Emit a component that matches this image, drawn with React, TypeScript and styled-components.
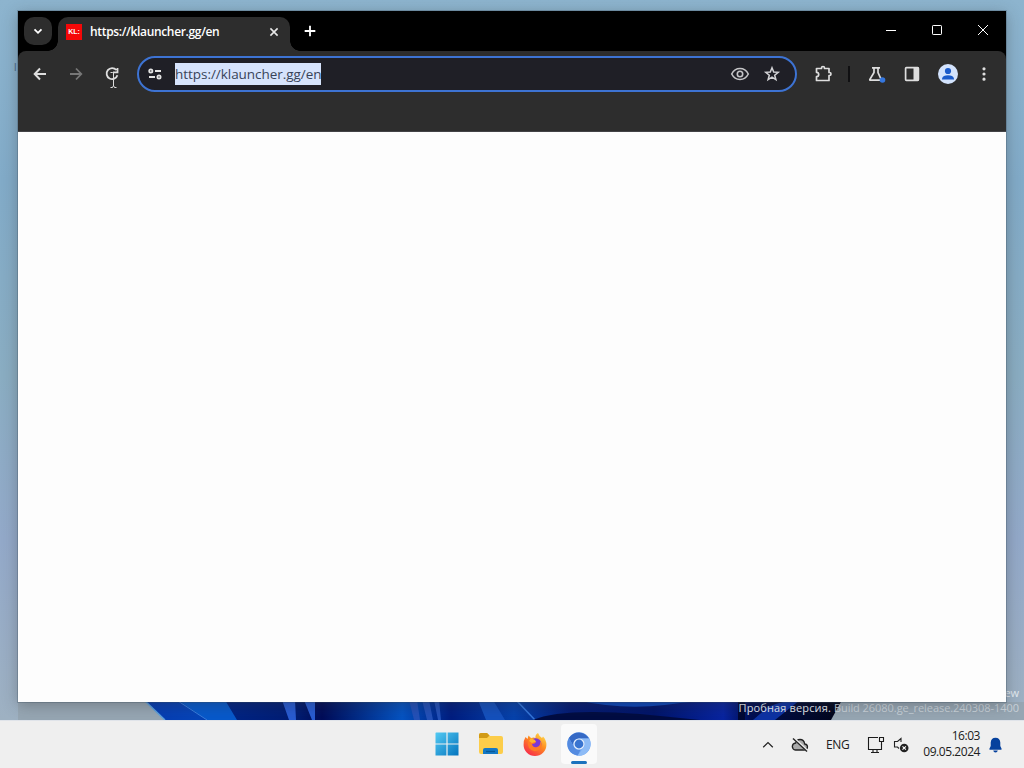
import React from 'react';
import styled, { createGlobalStyle } from 'styled-components';

const GlobalStyle = createGlobalStyle`
    * { box-sizing: border-box; }
    body { margin: 0; overflow: hidden; font-family: 'Open Sans', 'Noto Sans', sans-serif; }
    svg { display: block; flex: none; }
`;

const Screen = styled.div`
    width: 1024px;
    height: 768px;
    display: flex;
    flex-direction: column;
    overflow: hidden;
`;

const Desktop = styled.div`
    position: relative;
    height: 720px;
    padding: 11px 18px 18px;
    overflow: hidden;
    background: linear-gradient(180deg, #8db4ce 0%, #82abc8 25%, #8aadc2 52%, #93a9c9 75%, #9eb1c2 100%);
`;

const Wallpaper = styled.svg`
    position: absolute;
    left: 0;
    top: 700px;
`;

const ShortcutLabel = styled.span`
    position: absolute;
    left: 14px;
    top: 61px;
    color: #44637c;
    font-size: 10px;
    line-height: 12px;
`;

const Watermark = styled.div`
    position: absolute;
    right: 5px;
    bottom: 5px;
    color: #e4ebf2;
    font-size: 11px;
    line-height: 15px;
    text-align: right;
    white-space: nowrap;
`;

const WatermarkLine = styled.div<{ $spacing: number }>`
    letter-spacing: ${p => p.$spacing}px;
`;

const Faded = styled.span`
    color: #c9d2da;
    letter-spacing: -0.05px;
`;

const BrowserWindow = styled.div`
    position: relative;
    height: 691px;
    display: flex;
    flex-direction: column;
    background: #000;
    box-shadow: 0 0 0 1px rgba(60, 80, 95, 0.3), 0 3px 14px rgba(50, 50, 50, 0.35);
`;

const TitleBar = styled.div`
    height: 40px;
    display: flex;
    align-items: flex-start;
    padding-left: 6px;
`;

const TabSearch = styled.div`
    width: 28px;
    height: 28px;
    margin-top: 6px;
    border-radius: 10px;
    background: #2d2d2d;
`;

const Tab = styled.div`
    position: relative;
    width: 232px;
    height: 34px;
    margin: 6px 0 0 6px;
    padding: 0 8px 4px 8px;
    display: flex;
    align-items: center;
    border-radius: 10px 10px 0 0;
    background: #2d2d2d;

    &::before,
    &::after {
        content: '';
        position: absolute;
        bottom: 0;
        width: 10px;
        height: 10px;
    }
    &::before {
        left: -10px;
        background: radial-gradient(circle at 0 0, transparent 9.5px, #2d2d2d 10px);
    }
    &::after {
        right: -10px;
        background: radial-gradient(circle at 100% 0, transparent 9.5px, #2d2d2d 10px);
    }
`;

const Favicon = styled.div`
    width: 16px;
    height: 16px;
    background: #f50808;
    color: #fff;
    font: bold 7px/16px 'Liberation Sans', sans-serif;
    text-align: center;
`;

const TabTitle = styled.div`
    flex: 1;
    margin-left: 8px;
    color: #fff;
    font-size: 12px;
    font-weight: 600;
    letter-spacing: -0.33px;
    line-height: 18px;
    white-space: nowrap;
`;

const NewTab = styled.div`
    margin: 6px 0 0 6px;
`;

const CaptionButtons = styled.div`
    display: flex;
    margin-left: auto;
`;

const Caption = styled.div`
    width: 46px;
    height: 38px;
    display: flex;
    align-items: center;
    justify-content: center;
`;

const Toolbar = styled.div`
    height: 81px;
    display: flex;
    align-items: flex-start;
    padding: 5px 4px 0;
    background: #2d2d2d;
    border-radius: 8px 8px 0 0;
    border-bottom: 1px solid #434346;
`;

const Tool = styled.div<{ $width?: number }>`
    flex: none;
    width: ${p => p.$width || 36}px;
    height: 36px;
    display: flex;
    align-items: center;
    justify-content: center;
`;

const Omnibox = styled.div`
    flex: none;
    width: 660px;
    height: 36px;
    margin-left: 7px;
    padding: 0 13px 0 6px;
    display: flex;
    align-items: center;
    gap: 12px;
    border: 2px solid #3d73d3;
    border-radius: 18px;
    background: #1f1f26;
`;

const SiteInfo = styled.div`
    width: 20px;
    height: 20px;
`;

const Url = styled.span`
    width: 146px;
    height: 22px;
    margin-left: -2px;
    margin-right: auto;
    background: #d6e3fc;
    color: #384358;
    font-size: 13.5px;
    line-height: 22px;
    letter-spacing: -0.04px;
    white-space: nowrap;
`;

const Divider = styled.div`
    flex: none;
    width: 2px;
    height: 16px;
    margin: 10px 8px 0 0;
    background: #101012;
`;

const Page = styled.div`
    flex: 1;
    background: #fdfdfd;
`;

const Cursor = styled.svg`
    position: absolute;
    left: 92px;
    top: 60px;
`;

const Taskbar = styled.div`
    height: 48px;
    display: grid;
    grid-template-columns: 1fr 174px 1fr;
    background: #efefef;
    border-top: 1px solid #e0e4ea;
`;

const Apps = styled.div`
    grid-column: 2;
    display: flex;
`;

const AppButton = styled.div<{ $active?: boolean }>`
    position: relative;
    flex: none;
    width: 36px;
    height: 40px;
    margin: 3px 4px;
    display: flex;
    align-items: center;
    justify-content: center;
    border-radius: 4px;
    background: ${p => (p.$active ? '#fafafa' : 'transparent')};

    &::after {
        content: '';
        display: ${p => (p.$active ? 'block' : 'none')};
        position: absolute;
        left: 10px;
        bottom: 0;
        width: 16px;
        height: 3px;
        border-radius: 2px;
        background: #1a72bd;
    }
`;

const Tray = styled.div`
    display: flex;
    align-items: center;
    justify-content: flex-end;
    padding-right: 21px;
    color: #202020;
`;

const Language = styled.div`
    margin: 0 17px 0 17px;
    width: 24px;
    font-size: 12px;
    letter-spacing: -0.35px;
    white-space: nowrap;
`;

const Clock = styled.div`
    width: 60px;
    margin: -1px 8px 0 10px;
    font-size: 12px;
    line-height: 16px;
    letter-spacing: -0.45px;
    text-align: right;
    white-space: nowrap;
`;

interface IconProps {
    size?: number;
    color?: string;
    stroke?: number;
    children: React.ReactNode;
}

// all toolbar glyphs share a 20 unit grid
const Icon: React.FC<IconProps> = ({ size = 20, color = '#dedede', stroke = 1.7, children }) => (
    <svg width={size} height={size} viewBox="0 0 20 20" fill="none" stroke={color} strokeWidth={stroke}>
        {children}
    </svg>
);

const Bloom = () => (
    <Wallpaper width="1024" height="20" viewBox="0 0 1024 20">
        <defs>
            <linearGradient id="petals" x1="0" x2="1">
                <stop offset="0" stopColor="#063bb0" />
                <stop offset=".08" stopColor="#0644b8" />
                <stop offset=".12" stopColor="#002484" />
                <stop offset=".22" stopColor="#001c72" />
                <stop offset=".255" stopColor="#000c58" />
                <stop offset=".37" stopColor="#0553c2" />
                <stop offset=".44" stopColor="#001d80" />
                <stop offset=".53" stopColor="#0642ac" />
                <stop offset=".61" stopColor="#041b74" />
                <stop offset=".73" stopColor="#001469" />
                <stop offset=".83" stopColor="#0824a0" />
                <stop offset=".87" stopColor="#000e52" />
                <stop offset="1" stopColor="#020618" />
            </linearGradient>
        </defs>
        <rect x="18" y="2" width="1006" height="18" fill="#96a6b3" />
        <path d="M144 0L165 20H831L842 0Z" fill="url(#petals)" />
        <path d="M144 0L165 20" stroke="#5b9fdc" strokeWidth="1.5" />
        <path d="M178 0L207 20H237L225 0Z" fill="#0759cb" />
        <path d="M178 1L207 20" stroke="#387ddd" />
        <path d="M282 0L289 20H296L295 0ZM304 0L312 20H315V0Z" fill="#285bd2" />
        <path d="M409 0L414 20H420L417 0ZM422 0L427 20H433L429 0ZM434 0L438 20H441L439 0Z" fill="#2350b8" />
        <path d="M478 0L486 20H505L493 0Z" fill="#1450bd" />
        <path d="M516 0L535 20" stroke="#3476da" strokeWidth="1.5" />
        <path d="M533 20Q560 8 640 14L700 20Z" fill="#000c42" />
        <path d="M576 0Q620 10 665 5Q700 0 730 0Z" fill="#0c46ba" />
        <path d="M738 0H745V20H738Z" fill="#010834" />
        <path d="M753 20L768 7Q784 0 800 0L775 20Z" fill="#0d32a4" />
    </Wallpaper>
);

const Start = () => (
    <svg width="24" height="24" viewBox="0 0 24 24">
        <defs>
            <linearGradient id="start" gradientUnits="userSpaceOnUse" x2="24" y2="24">
                <stop stopColor="#55ccf4" />
                <stop offset="1" stopColor="#0272bd" />
            </linearGradient>
        </defs>
        <path fill="url(#start)" d="M1 .5H11.4V11.4H.5V1ZM12.6 .5H23.5V11.4H12.6ZM.5 12.6H11.4V23.5H.5ZM12.6 12.6H23.5V23.5H12.6Z" />
    </svg>
);

const Explorer = () => (
    <svg width="26" height="24" viewBox="0 0 26 24">
        <path d="M1 3Q1 1 3 1H9L12 4H23Q25 4 25 6V20Q25 22 23 22H3Q1 22 1 20Z" fill="#fccd4a" />
        <path d="M1 3Q1 1 3 1H9L11.5 3.5L9 6H1Z" fill="#d19a16" />
        <path d="M5 22V18Q5 16 7 16H18Q20 16 20 18V22Z" fill="#1478c5" />
        <path d="M8 19.5H17" stroke="#075999" strokeWidth="1.3" />
    </svg>
);

const Firefox = () => (
    <svg width="24" height="24" viewBox="0 0 24 24">
        <defs>
            <linearGradient id="fox" x1=".9" y1="0" x2=".2" y2="1">
                <stop stopColor="#ffe550" />
                <stop offset=".45" stopColor="#ff8a1f" />
                <stop offset="1" stopColor="#f6244e" />
            </linearGradient>
        </defs>
        <path fill="url(#fox)" d="M2.5 5L4.5 7L5.5 3.5L8 6Q11 5 12.5 6Q12 2.5 15 1Q16 4 19 6L20 4.5Q23.5 8 23.4 13A11.4 11 0 0 1 .6 13Q.5 8 2.5 5Z" />
        <circle cx="12.7" cy="12" r="5.7" fill="#7b38d4" />
        <path d="M5 8Q8 6 10 8L13 10Q12 12 9 12Q10 16 14 15Q18 14 17 9Q21 14 16 18Q10 21 6 16Q4 12 5 8Z" fill="#ff7b25" />
        <path d="M8 6L12 8L13 10Q11 10 9 11L6 9Z" fill="#ffb52e" />
    </svg>
);

const Chromium = () => (
    <svg width="24" height="24" viewBox="0 0 24 24">
        <circle cx="12" cy="12" r="11.7" fill="#72a9f3" />
        <path d="M1.9 6.1A11.7 11.7 0 0 1 22.1 6.5H12A5.6 5.6 0 0 0 7 14.7Z" fill="#3569c5" />
        <path d="M1.9 6.1L7 14.8A5.6 5.6 0 0 0 13.6 17.4L10.8 23.6A11.7 11.7 0 0 1 1.9 6.1Z" fill="#548be0" />
        <path d="M22.1 6.5H12L17 9.2Q18.8 13 16.8 15L10.8 23.6A11.7 11.7 0 0 0 22.1 6.5Z" fill="#8dbbf6" />
        <circle cx="12" cy="12" r="5.6" fill="#e6effc" />
        <circle cx="12" cy="12" r="4.4" fill="#3974d0" />
    </svg>
);

const TabStrip = () => (
    <TitleBar>
        <TabSearch>
            <Icon size={28} color="#fff" stroke={1.3}><path d="M7.5 8.8L10 11.3L12.5 8.8" /></Icon>
        </TabSearch>
        <Tab>
            <Favicon>KL:</Favicon>
            <TabTitle>https://klauncher.gg/en</TabTitle>
            <Icon size={16} color="#e8e8e8" stroke={2}><path d="M5.5 5.5L14.5 14.5M14.5 5.5L5.5 14.5" /></Icon>
        </Tab>
        <NewTab>
            <Icon size={28} color="#fff" stroke={1.3}><path d="M6.2 10H13.8M10 6.2V13.8" /></Icon>
        </NewTab>
        <CaptionButtons>
            <Caption><Icon color="#fff" stroke={1}><path d="M5 10.5H15" /></Icon></Caption>
            <Caption><Icon color="#fff" stroke={1}><rect x="5.5" y="5.5" width="9" height="9" rx=".7" /></Icon></Caption>
            <Caption><Icon color="#fff" stroke={1}><path d="M5 5L15 15M15 5L5 15" /></Icon></Caption>
        </CaptionButtons>
    </TitleBar>
);

const BrowserToolbar = () => (
    <Toolbar>
        <Tool><Icon stroke={2}><path d="M16 10H5M10 4.5L4.7 10L10 15.5" /></Icon></Tool>
        <Tool><Icon color="#777" stroke={1.8}><path d="M4 10H15M10 4.5L15.3 10L10 15.5" /></Icon></Tool>
        <Tool>
            <Icon stroke={1.8}>
                <path d="M14.3 6A5.5 5.5 0 1 0 15.4 11.2M15.5 4V8.3H11" />
            </Icon>
        </Tool>
        <Omnibox>
            <SiteInfo>
                <Icon size={20} color="#e3e3e3" stroke={1.8}>
                    <circle cx="5.8" cy="7" r="1.6" />
                    <path d="M10 7H16M4 13H10" />
                    <circle cx="14" cy="13" r="1.6" />
                </Icon>
            </SiteInfo>
            <Url>https://klauncher.gg/en</Url>
            <Icon color="#c4c4c7" stroke={1.6}>
                <path d="M1.7 10Q4.5 4.5 10 4.5T18.3 10Q15.5 15.5 10 15.5T1.7 10Z" />
                <circle cx="10" cy="10" r="2.7" />
            </Icon>
            <Icon color="#d2d2d5" stroke={1.5}>
                <path d="M10 3.8L11.7 8L16.2 8.3L12.7 11.2L13.9 15.7L10 13.2L6.1 15.7L7.3 11.2L3.8 8.3L8.3 8Z" />
            </Icon>
        </Omnibox>
        <Tool $width={51}>
            <Icon>
                <path d="M3.5 4.5H8.5V4A1.5 1.5 0 0 1 11.5 4V4.5H16V8.5H16.5A1.5 1.5 0 0 1 16.5 11.5H16V16.5H3.5V12.7A2.2 2.2 0 0 0 3.5 8.3Z" strokeLinejoin="round" />
            </Icon>
        </Tool>
        <Divider />
        <Tool>
            <Icon>
                <path d="M6 3.8H14M8 4V8.5L3.8 15.5Q3.7 16.2 4.5 16.2H15.5L12 8.5V4" />
                <circle cx="16.5" cy="16" r="2.8" fill="#3577df" stroke="none" />
            </Icon>
        </Tool>
        <Tool>
            <Icon>
                <rect x="3.6" y="3.7" width="12.8" height="12.6" rx=".8" />
                <path d="M11.5 3.5H17V16.5H11.5Z" fill="#dedede" stroke="none" />
            </Icon>
        </Tool>
        <Tool>
            <Icon color="none">
                <circle cx="10" cy="10" r="10" fill="#d3e3fd" />
                <circle cx="10" cy="7" r="3.1" fill="#1a5bcb" />
                <path d="M4 15.5V14.5Q5 11.3 10 11.3T16 14.5V15.5Z" fill="#1a5bcb" />
            </Icon>
        </Tool>
        <Tool>
            <Icon color="none">
                <path d="M10 3.2A1.6 1.6 0 1 1 10 6.4A1.6 1.6 0 1 1 10 3.2M10 8.4A1.6 1.6 0 1 1 10 11.6A1.6 1.6 0 1 1 10 8.4M10 13.6A1.6 1.6 0 1 1 10 16.8A1.6 1.6 0 1 1 10 13.6" fill="#dedede" />
            </Icon>
        </Tool>
    </Toolbar>
);

const SystemTray = () => (
    <Tray>
        <svg width="12" height="12" fill="none" stroke="#222" strokeWidth="1.2"><path d="M1.2 8.3L6 3.6L10.8 8.3" /></svg>
        <svg width="18" height="16" viewBox="0 0 18 16" fill="none" stroke="#222" strokeWidth="1.3" style={{ marginLeft: 17 }}>
            <path d="M4.5 13H13.5Q16.5 12.6 16.5 9.8Q16.3 7.2 13.7 7Q13 2.5 9 2.5Q5.5 2.5 4.7 6Q1.5 6.3 1.3 9.5Q1.5 12.6 4.5 13Z" fill="#aaa" />
            <path d="M3 1.5L16.5 14" stroke="#efefef" strokeWidth="2.4" />
            <path d="M2 1.5L16 14.5" strokeWidth="1.4" />
        </svg>
        <Language>ENG</Language>
        <svg width="18" height="18" viewBox="0 0 18 18" fill="none" stroke="#1b1b1b" strokeWidth="1.1">
            <path d="M11 1.5H1.5V13.5H14.5V8M4 16.5H12M6 13.5V16.5M10 13.5V16.5" />
            <path d="M12.5 1.5H16.5V5.5H12.5ZM14.5 5.5V9" />
        </svg>
        <svg width="17" height="18" viewBox="0 0 17 18" fill="none" stroke="#222" strokeWidth="1.1" style={{ marginLeft: 8 }}>
            <path d="M8 6V2.5L4.5 5.5H1.5V11H4.5L6 12.5" />
            <circle cx="11.2" cy="12" r="4.3" fill="#222" stroke="none" />
            <path d="M9.5 10.3L12.9 13.7M12.9 10.3L9.5 13.7" stroke="#fff" />
        </svg>
        <Clock>
            <div>16:03</div>
            <div>09.05.2024</div>
        </Clock>
        <svg width="15" height="16" viewBox="0 0 15 16" fill="#06419d">
            <path d="M7.5 .8Q12 1 12.3 5.5V9L13.7 12Q13.8 12.7 13 12.7H2Q1.2 12.7 1.3 12L2.7 9V5.5Q3 1 7.5 .8ZM5.2 13.5H9.8Q9.4 15.5 7.5 15.5T5.2 13.5Z" />
        </svg>
    </Tray>
);

const App: React.FC = () => {
    return (
        <Screen>
            <GlobalStyle />
            <Desktop>
                <Bloom />
                <ShortcutLabel>l</ShortcutLabel>
                <Watermark>
                    <WatermarkLine $spacing={-0.1}>Windows 11 Pro Insider Preview</WatermarkLine>
                    <WatermarkLine $spacing={0.13}>Пробная версия. <Faded>Build 26080.ge_release.240308-1400</Faded></WatermarkLine>
                </Watermark>
                <BrowserWindow>
                    <TabStrip />
                    <BrowserToolbar />
                    <Page />
                    <Cursor width="8" height="18" fill="none" stroke="#ddd">
                        <path d="M.5 1.5H2.5L3.5 2.5L4.5 1.5H6.5M3.5 2V15M.5 16.5H2.5L3.5 14.5L4.5 16.5H6.5" />
                    </Cursor>
                </BrowserWindow>
            </Desktop>
            <Taskbar>
                <Apps>
                    <AppButton><Start /></AppButton>
                    <AppButton><Explorer /></AppButton>
                    <AppButton><Firefox /></AppButton>
                    <AppButton $active><Chromium /></AppButton>
                </Apps>
                <SystemTray />
            </Taskbar>
        </Screen>
    );
};

export default App;
